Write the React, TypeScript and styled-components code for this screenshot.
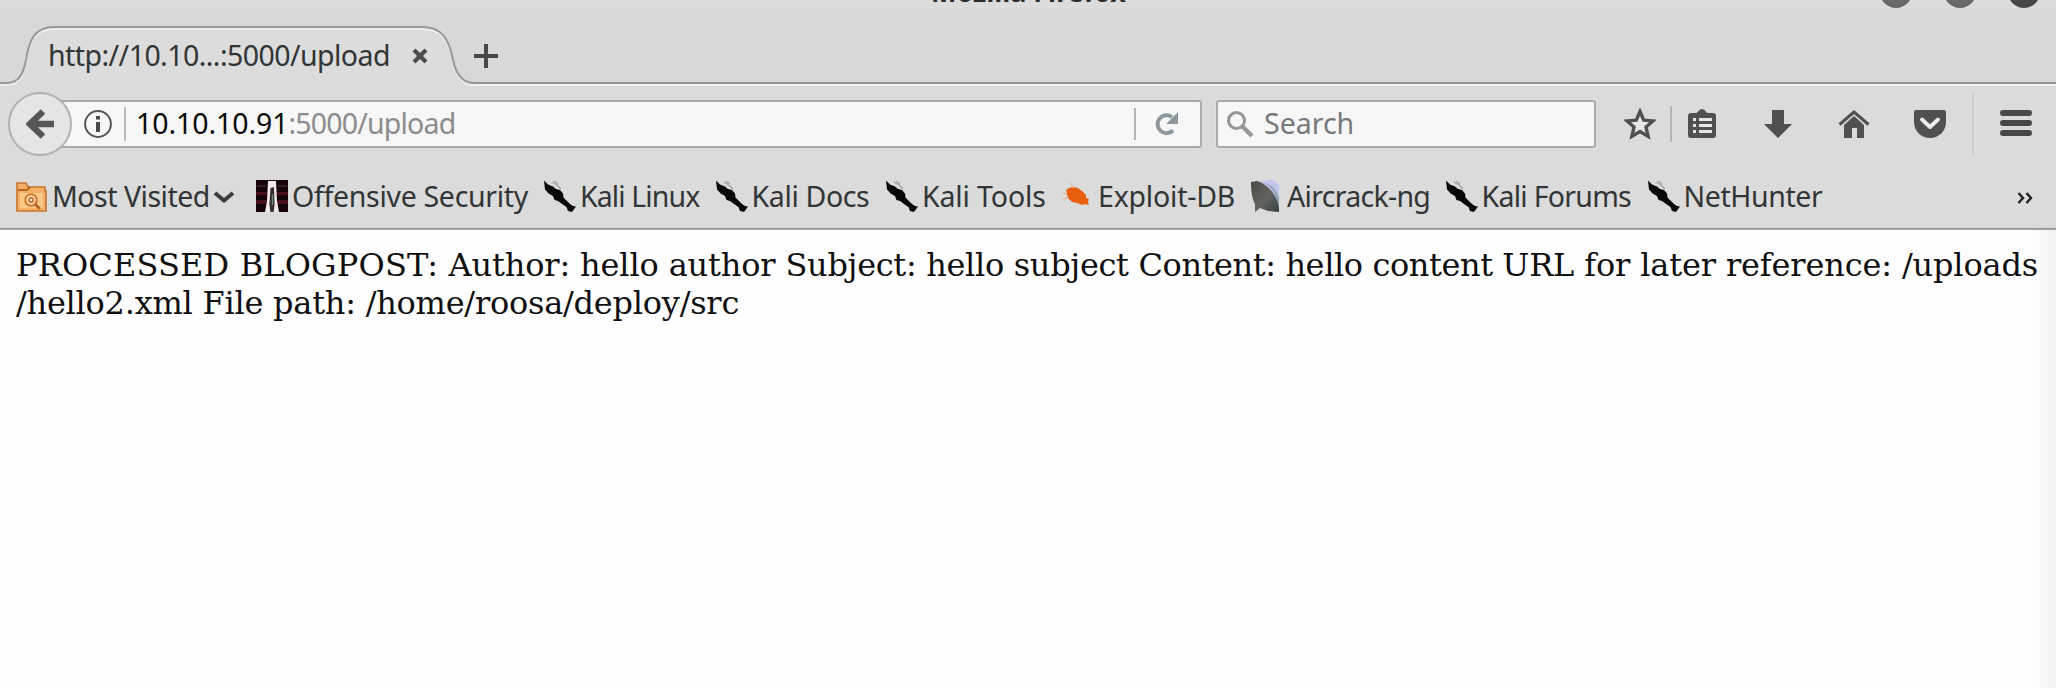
import React from 'react';
import styled, { createGlobalStyle } from 'styled-components';

const GlobalStyle = createGlobalStyle`
  html, body { margin: 0; padding: 0; overflow: hidden; background: #fefefe; }
  * { box-sizing: border-box; }
  svg { display: block; flex: none; }
`;

const Window = styled.div`
  width: 2056px;
  height: 688px;
  display: flex;
  flex-direction: column;
  overflow: hidden;
  background: #fefefe;
  color: #323535;
  font-family: 'Noto Sans', 'Open Sans', sans-serif;
  font-size: 28.5px;
`;

const TitleBar = styled.header`
  position: relative;
  height: 8px;
  flex: none;
  overflow: hidden;
  background: #dcdcdc;
`;

const WindowTitle = styled.div`
  position: absolute;
  left: 931px;
  bottom: -2px;
  height: 36px;
  line-height: 36px;
  font-weight: 700;
  font-size: 27px;
  letter-spacing: -0.05px;
  color: #2c2c2c;
  white-space: nowrap;
`;

const WindowControls = styled.div`
  position: absolute;
  right: 16px;
  bottom: 0;
  display: flex;
  gap: 32px;
`;

const WindowControl = styled.span<{ $dark?: boolean }>`
  width: 32px;
  height: 32px;
  border-radius: 50%;
  background: ${(p) => (p.$dark ? '#464646' : '#696969')};
`;

const TabStrip = styled.nav`
  height: 76px;
  flex: none;
  display: flex;
  background: linear-gradient(#d8d8d8 74px, #969696 74px, #969696 76px);
`;

const Tab = styled.div`
  position: relative;
  width: 474px;
  height: 78px;
  display: flex;
  align-items: center;
  padding: 0 0 0 48px;
`;

const TabShape = styled.svg`
  position: absolute;
  left: 0;
  top: 0;
`;

const TabLabel = styled.span`
  position: relative;
  width: 364px;
  height: 78px;
  line-height: 95px;
  white-space: nowrap;
  letter-spacing: -0.56px;
`;

const TabClose = styled.svg`
  position: relative;
  top: 9px;
`;

const NewTab = styled.button`
  border: 0;
  padding: 0;
  height: 96px;
  background: none;
  display: flex;
  align-items: center;
`;

const NavBar = styled.div`
  height: 80px;
  flex: none;
  display: flex;
  align-items: center;
  padding-left: 8px;
  background: linear-gradient(#f2f2f2 2px, #dbdbdb 2px);
`;

const BackButton = styled.button`
  position: relative;
  z-index: 1;
  width: 64px;
  height: 64px;
  flex: none;
  border: 2px solid #b2b2b2;
  border-radius: 50%;
  padding: 0;
  background: #e5e5e5;
  display: flex;
  align-items: center;
  justify-content: center;
`;

const Field = styled.div<{ $width: number; $url?: boolean }>`
  width: ${(p) => p.$width}px;
  height: 48px;
  flex: none;
  display: flex;
  align-items: center;
  margin-left: ${(p) => (p.$url ? -22 : 14)}px;
  padding-left: ${(p) => (p.$url ? 32 : 8)}px;
  border: 2px solid #aaaaaa;
  border-radius: 3px;
  background: #f7f7f7;
  box-shadow: 0 0 0 1px #dfdfdf;
`;

const Divider = styled.span<{ $height: number; $light?: boolean }>`
  width: 2px;
  height: ${(p) => p.$height}px;
  flex: none;
  background: ${(p) => (p.$light ? '#cccccc' : '#b4b4b4')};
`;

const AddressDivider = styled.span`
  width: 2px;
  height: 34px;
  flex: none;
  margin-left: 12px;
  background: #bbbbbb;
`;

const Address = styled.div`
  display: flex;
  flex: 1;
  padding: 0 0 2px 10px;
  line-height: 43px;
  white-space: nowrap;
`;

const Host = styled.span`
  color: #0c0c0c;
  width: 152.5px;
  letter-spacing: -0.07px;
`;

const Path = styled.span`
  color: #8c8c8c;
  letter-spacing: -0.82px;
`;

const Reload = styled.span`
  padding: 0 20px 0 18px;
`;

const Placeholder = styled.span`
  padding: 0 0 2px 10px;
  line-height: 43px;
  color: #777979;
`;

const Tools = styled.div`
  display: flex;
  align-items: center;
  margin-left: 28px;
`;

const Tool = styled.span<{ $width?: number; $before?: number; $after: number }>`
  width: ${(p) => p.$width ?? 32}px;
  height: 32px;
  margin-left: ${(p) => p.$before ?? 0}px;
  margin-right: ${(p) => p.$after}px;
  color: #505050;
`;

const MenuTool = styled.span`
  margin-left: 26px;
  color: #484848;
`;

const BookmarkBar = styled.div`
  height: 66px;
  flex: none;
  display: flex;
  align-items: flex-start;
  padding: 16px 23px 0 16px;
  background: linear-gradient(#dbdbdb 63px, #c6c6c6 64px, #9c9c9c 64px, #a4a4a4 66px);
`;

const Bookmark = styled.div<{ $width: number }>`
  width: ${(p) => p.$width}px;
  flex: none;
  display: flex;
  align-items: flex-start;
  gap: 4px;
`;

const BookmarkLabel = styled.span<{ $spacing: number }>`
  line-height: 32px;
  white-space: nowrap;
  letter-spacing: ${(p) => p.$spacing}px;
`;

const MenuArrow = styled.svg`
  margin: 11px 0 0 -1px;
`;

const Overflow = styled.span`
  margin-left: auto;
  padding-top: 12px;
`;

const Page = styled.main`
  flex: 1;
  padding: 17px 0 0 16px;
  color: #101010;
  background: linear-gradient(90deg, #fefefe 2032px, #fbfbfb 2032px, #fbfbfb 2040px, #f7f7f7 2040px, #f7f7f7 2048px, #f3f3f3 2048px);
  font-family: 'DejaVu Serif', serif;
  font-size: 32px;
  line-height: 37.6px;
  white-space: pre;
`;

const Phrase = styled.span<{ $spacing: number }>`
  letter-spacing: ${(p) => p.$spacing}px;
`;

const OUTLINE =
  'M0 75H6C19 75 23 67 26 52C29 33 34 19 54 19H422C442 19 449 31 453 52C456 66 462 75 474 75';

const FolderIcon = () => (
  <svg width="32" height="32" viewBox="0 0 32 32">
    <path d="M1 3h9l2 4h17v4h1v20H1z" fill="#f4b066" stroke="#c8742c" strokeWidth="1.6" />
    <path d="M2 10h9l3-3" fill="none" stroke="#b76320" strokeWidth="1.8" />
    <path d="M4 13h23v15H4z" fill="#fbc987" />
    <circle cx="15" cy="20" r="5.8" fill="#fddcae" stroke="#cc7730" strokeWidth="2" />
    <circle cx="15" cy="20" r="2.2" fill="none" stroke="#c06e2b" strokeWidth="1.6" />
    <path d="M19 24l5 5" stroke="#b8621f" strokeWidth="2.6" />
  </svg>
);

const OffensiveIcon = () => (
  <svg width="32" height="32" viewBox="0 0 32 32">
    <path d="M0 0h32v32H0z" fill="#150508" />
    <path d="M0 12h11v3H0zM21 12h11v3H21zM0 20h11v4H0zM21 20h11v4H21z" fill="#4a1019" />
    <path d="M1 5h9v2H1zM22 5h9v2h-9z" fill="#2d2024" />
    <path d="M12 1h8l1 20 2 11H9l2-11z" fill="#f6e9ec" />
    <path d="M14.5 8L18 7l.6 17-1 8h-3.2l-1-8z" fill="#30302f" />
    <path d="M16.5 14v11" stroke="#77827a" strokeWidth="1.4" />
  </svg>
);

const KaliIcon = () => (
  <svg width="32" height="32" viewBox="0 0 32 32">
    <path
      d="M0 .5l4 4 5 2 3 2.500 4 1 3 3.500 .5 4 3.500 3.500 3 3 3 2 3 .5-4 5.500-4-1-1.500-4-4.500-3-4-3-3.500-1-1.500-4-4.500-2.500-2.500-3-1-1z"
      fill="#080808"
    />
    <path d="M8 2l5 3 4 4M10 1l4 3" fill="none" stroke="#a0a0a0" strokeWidth="1.1" />
  </svg>
);

const ExploitIcon = () => (
  <svg width="32" height="32" viewBox="0 0 32 32">
    <path
      d="M4 10l3-2 4-1 5 1 4 3 4 4v3l3 1-1 3 1 3-4-1-3 1-5-2-5-1-4-4-1-4z"
      fill="#e8600f"
    />
    <path d="M0 13l5 1M1 19l5-1M9 3l2 5" stroke="#eeb58d" strokeWidth="1.2" />
  </svg>
);

const AircrackIcon = () => (
  <svg width="32" height="32" viewBox="0 0 32 32">
    <defs>
      <linearGradient id="dish" x1="0" y1="0" x2="1" y2="1">
        <stop offset="0" stopColor="#4a4a44" />
        <stop offset=".55" stopColor="#62635d" />
        <stop offset="1" stopColor="#354145" />
      </linearGradient>
    </defs>
    <path d="M8 1L22 0l6 5v26z" fill="#c3c6ec" />
    <path d="M11 3c9 1 15 12 17 26V17C25 8 18 3 11 3z" fill="#8fa3b6" />
    <path d="M0 2l6-1c10 3 20 13 22 27v4l-11-1-8-3-5 4V24C1 18 0 11 0 2z" fill="url(#dish)" />
  </svg>
);

const bookmarks = [
  { label: 'Most Visited', icon: FolderIcon, width: 240, spacing: -0.5, menu: true },
  { label: 'Offensive Security', icon: OffensiveIcon, width: 288, spacing: -0.3 },
  { label: 'Kali Linux', icon: KaliIcon, width: 171.5, spacing: -0.9 },
  { label: 'Kali Docs', icon: KaliIcon, width: 170.5, spacing: -0.36 },
  { label: 'Kali Tools', icon: KaliIcon, width: 176, spacing: -0.13 },
  { label: 'Exploit-DB', icon: ExploitIcon, width: 189, spacing: -0.2 },
  { label: 'Aircrack-ng', icon: AircrackIcon, width: 194.5, spacing: -0.7 },
  { label: 'Kali Forums', icon: KaliIcon, width: 202, spacing: -0.72 },
  { label: 'NetHunter', icon: KaliIcon, width: 180, spacing: -0.4 },
];

export default function App() {
  return (
    <Window>
      <GlobalStyle />
      <TitleBar>
        <WindowTitle>Mozilla Firefox</WindowTitle>
        <WindowControls>
          <WindowControl />
          <WindowControl />
          <WindowControl $dark />
        </WindowControls>
      </TitleBar>

      <TabStrip>
        <Tab>
          <TabShape width="474" height="78" viewBox="0 0 474 78">
            <path d={`${OUTLINE}V78H0z`} fill="#dcdcdc" />
            <path d={OUTLINE} transform="translate(0 2)" fill="none" stroke="#eeeeee" strokeWidth="2" />
            <path d={OUTLINE} fill="none" stroke="#989898" strokeWidth="2" />
          </TabShape>
          <TabLabel>http://10.10...:5000/upload</TabLabel>
          <TabClose width="16" height="16" viewBox="0 0 16 16">
            <path d="M2 2l12 12M14 2L2 14" stroke="#4c4c4c" strokeWidth="4.2" />
          </TabClose>
        </Tab>
        <NewTab aria-label="New tab">
          <svg width="24" height="24" viewBox="0 0 24 24">
            <path d="M12 0v24M0 12h24" stroke="#484848" strokeWidth="4" />
          </svg>
        </NewTab>
      </TabStrip>

      <NavBar>
        <BackButton aria-label="Back">
          <svg width="28" height="30" viewBox="0 0 28 30">
            <path d="M17 2.500L4 15l13 12.500M4 15h24" fill="none" stroke="#575757" strokeWidth="6.500" />
          </svg>
        </BackButton>
        <Field $width={1152} $url>
          <svg width="28" height="28" viewBox="0 0 28 28">
            <circle cx="14" cy="14" r="12.900" fill="none" stroke="#545454" strokeWidth="2" />
            <path d="M12 6h4v3.600h-4zM12 12h4v10h-4z" fill="#484848" />
          </svg>
          <AddressDivider />
          <Address>
            <Host>10.10.10.91</Host>
            <Path>:5000/upload</Path>
          </Address>
          <Divider $height={32} />
          <Reload>
            <svg width="26" height="26" viewBox="0 0 26 26">
              <path d="M19 19.500A9 9 0 1 1 18 6" fill="none" stroke="#8d979e" strokeWidth="4" />
              <path d="M24 1v12H12z" fill="#8d979e" />
            </svg>
          </Reload>
        </Field>
        <Field $width={380}>
          <svg width="28" height="28" viewBox="0 0 28 28">
            <circle cx="10.500" cy="10.500" r="8" fill="none" stroke="#969696" strokeWidth="3" />
            <path d="M16 16l10 10" stroke="#969696" strokeWidth="4.200" />
          </svg>
          <Placeholder>Search</Placeholder>
        </Field>
        <Tools>
          <Tool $after={14}>
            <svg width="32" height="32" viewBox="0 0 32 32">
              <path
                d="M16 3.500l3.700 8.600 9.300.8-7 6.200 2.100 9.300L16 23.600l-8.100 4.800 2.100-9.300-7-6.200 9.300-.8z"
                fill="#e9e9e9"
                stroke="currentColor"
                strokeWidth="3.400"
              />
            </svg>
          </Tool>
          <Divider $height={36} />
          <Tool $width={28} $before={16} $after={46}>
            <svg width="28" height="32" viewBox="0 0 28 32">
              <path d="M3 5h5c2 0 3-4 6-4s4 4 6 4h5a3 3 0 0 1 3 3v19a3 3 0 0 1-3 3H3a3 3 0 0 1-3-3V8a3 3 0 0 1 3-3z" fill="currentColor" />
              <path d="M5 10h3v3H5zM11 10h13v3H11zM5 16h3v3H5zM11 16h13v3H11zM5 22h3v3H5zM11 22h13v3H11z" fill="#e6e6e6" />
            </svg>
          </Tool>
          <Tool $after={44}>
            <svg width="32" height="32" viewBox="0 0 32 32">
              <path d="M10 2h12v14h8L16 30 2 16h8z" fill="currentColor" />
            </svg>
          </Tool>
          <Tool $after={44}>
            <svg width="32" height="32" viewBox="0 0 32 32">
              <path d="M1.500 16.500L16 4l14.500 12.500" fill="none" stroke="currentColor" strokeWidth="3" />
              <path d="M16 8l10 9v13h-7V20h-5v10H6V17z" fill="currentColor" />
            </svg>
          </Tool>
          <Tool $after={26}>
            <svg width="32" height="32" viewBox="0 0 32 32">
              <path d="M2 2h28a2 2 0 0 1 2 2v10c0 9-7 16-16 16S0 23 0 14V4a2 2 0 0 1 2-2z" fill="currentColor" />
              <path d="M8 11.500l8 7.500 8-7.500" fill="none" stroke="#ececec" strokeWidth="3.800" strokeLinecap="round" strokeLinejoin="round" />
            </svg>
          </Tool>
          <Divider $height={64} $light />
          <MenuTool>
            <svg width="32" height="28" viewBox="0 0 32 28">
              <path d="M3 3h26M3 13h26M3 23h26" stroke="currentColor" strokeWidth="6" strokeLinecap="round" />
            </svg>
          </MenuTool>
        </Tools>
      </NavBar>

      <BookmarkBar>
        {bookmarks.map(({ label, icon: Icon, width, spacing, menu }) => (
          <Bookmark key={label} $width={width}>
            <Icon />
            <BookmarkLabel $spacing={spacing}>{label}</BookmarkLabel>
            {menu && (
              <MenuArrow width="22" height="12" viewBox="0 0 22 12">
                <path d="M2 2l9 7.500L20 2" fill="none" stroke="#3c3c3c" strokeWidth="4" />
              </MenuArrow>
            )}
          </Bookmark>
        ))}
        <Overflow>
          <svg width="16" height="12" viewBox="0 0 16 12">
            <path d="M1.500 1L6 6l-4.500 5M9.500 1L14 6l-4.500 5" fill="none" stroke="#202020" strokeWidth="2.400" />
          </svg>
        </Overflow>
      </BookmarkBar>

      <Page>
        <Phrase $spacing={0.15}>{'PROCESSED BLOGPOST: '}</Phrase>
        <Phrase $spacing={-0.15}>{'Author: hello author '}</Phrase>
        <Phrase $spacing={-0.32}>{'Subject: hello subject '}</Phrase>
        <Phrase $spacing={-0.41}>{'Content: hello content '}</Phrase>
        <Phrase $spacing={-0.15}>{'URL for later reference: /uploads'}</Phrase>
        <br />
        <Phrase $spacing={-0.24}>{'/hello2.xml File path: /home/roosa/deploy/src'}</Phrase>
      </Page>
    </Window>
  );
}
